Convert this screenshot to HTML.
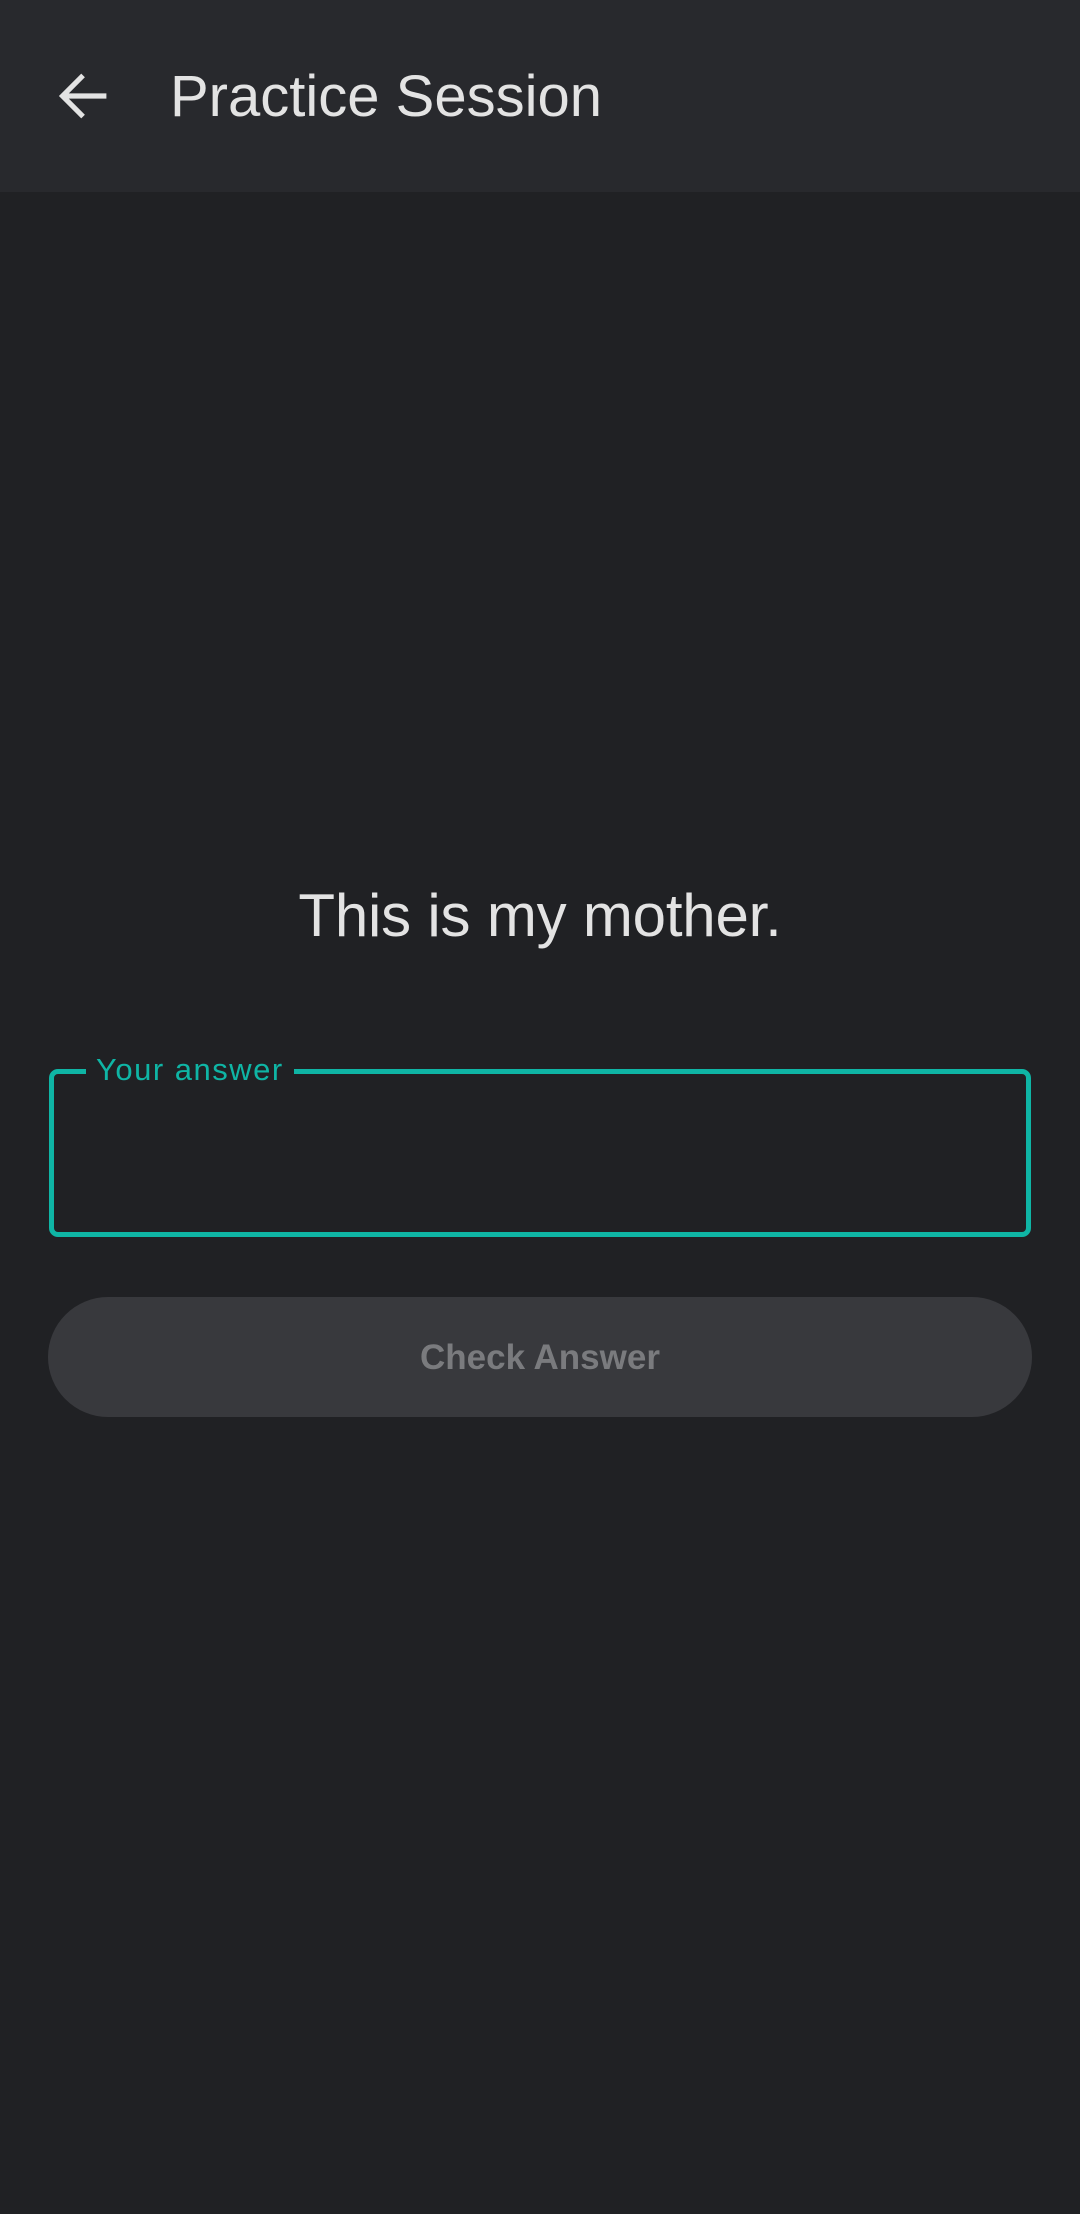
<!DOCTYPE html>
<html><head><meta charset="utf-8"><style>
html,body{margin:0;padding:0;}
body{width:1080px;height:2214px;background:#202124;position:relative;overflow:hidden;font-family:"Liberation Sans",Roboto,sans-serif;}
.hdr{position:absolute;left:0;top:0;width:1080px;height:192px;background:#28292d;}
.title{position:absolute;left:170px;top:62px;font-size:58px;line-height:70px;color:#e3e3e3;letter-spacing:0px;white-space:nowrap;}
.q{position:absolute;left:0;width:1080px;top:880px;text-align:center;font-size:60px;line-height:72px;color:#e3e3e3;letter-spacing:-0.2px;}
.box{position:absolute;left:49px;top:1069px;width:982px;height:168px;box-sizing:border-box;border:5px solid #0fb5a5;border-radius:9px;}
.lbl{position:absolute;left:86px;top:1050px;padding:0 10px;background:#202124;color:#0fb5a5;font-size:31px;line-height:40px;letter-spacing:1.5px;}
.btn{position:absolute;left:48px;top:1297px;width:984px;height:120px;border-radius:60px;background:#38393d;color:#7a7b7e;font-size:35px;font-weight:bold;text-align:center;line-height:122px;}
</style></head><body>
<div class="hdr">
<svg style="position:absolute;left:56px;top:68px" width="56" height="56" viewBox="0 0 60 60">
<path d="M54 30H10M29 8L7 30l22 22" fill="none" stroke="#e3e3e3" stroke-width="5.5"/>
</svg>
<div class="title">Practice Session</div>
</div>
<div class="q">This is my mother.</div>
<div class="box"></div>
<div class="lbl">Your answer</div>
<div class="btn">Check Answer</div>
</body></html>
